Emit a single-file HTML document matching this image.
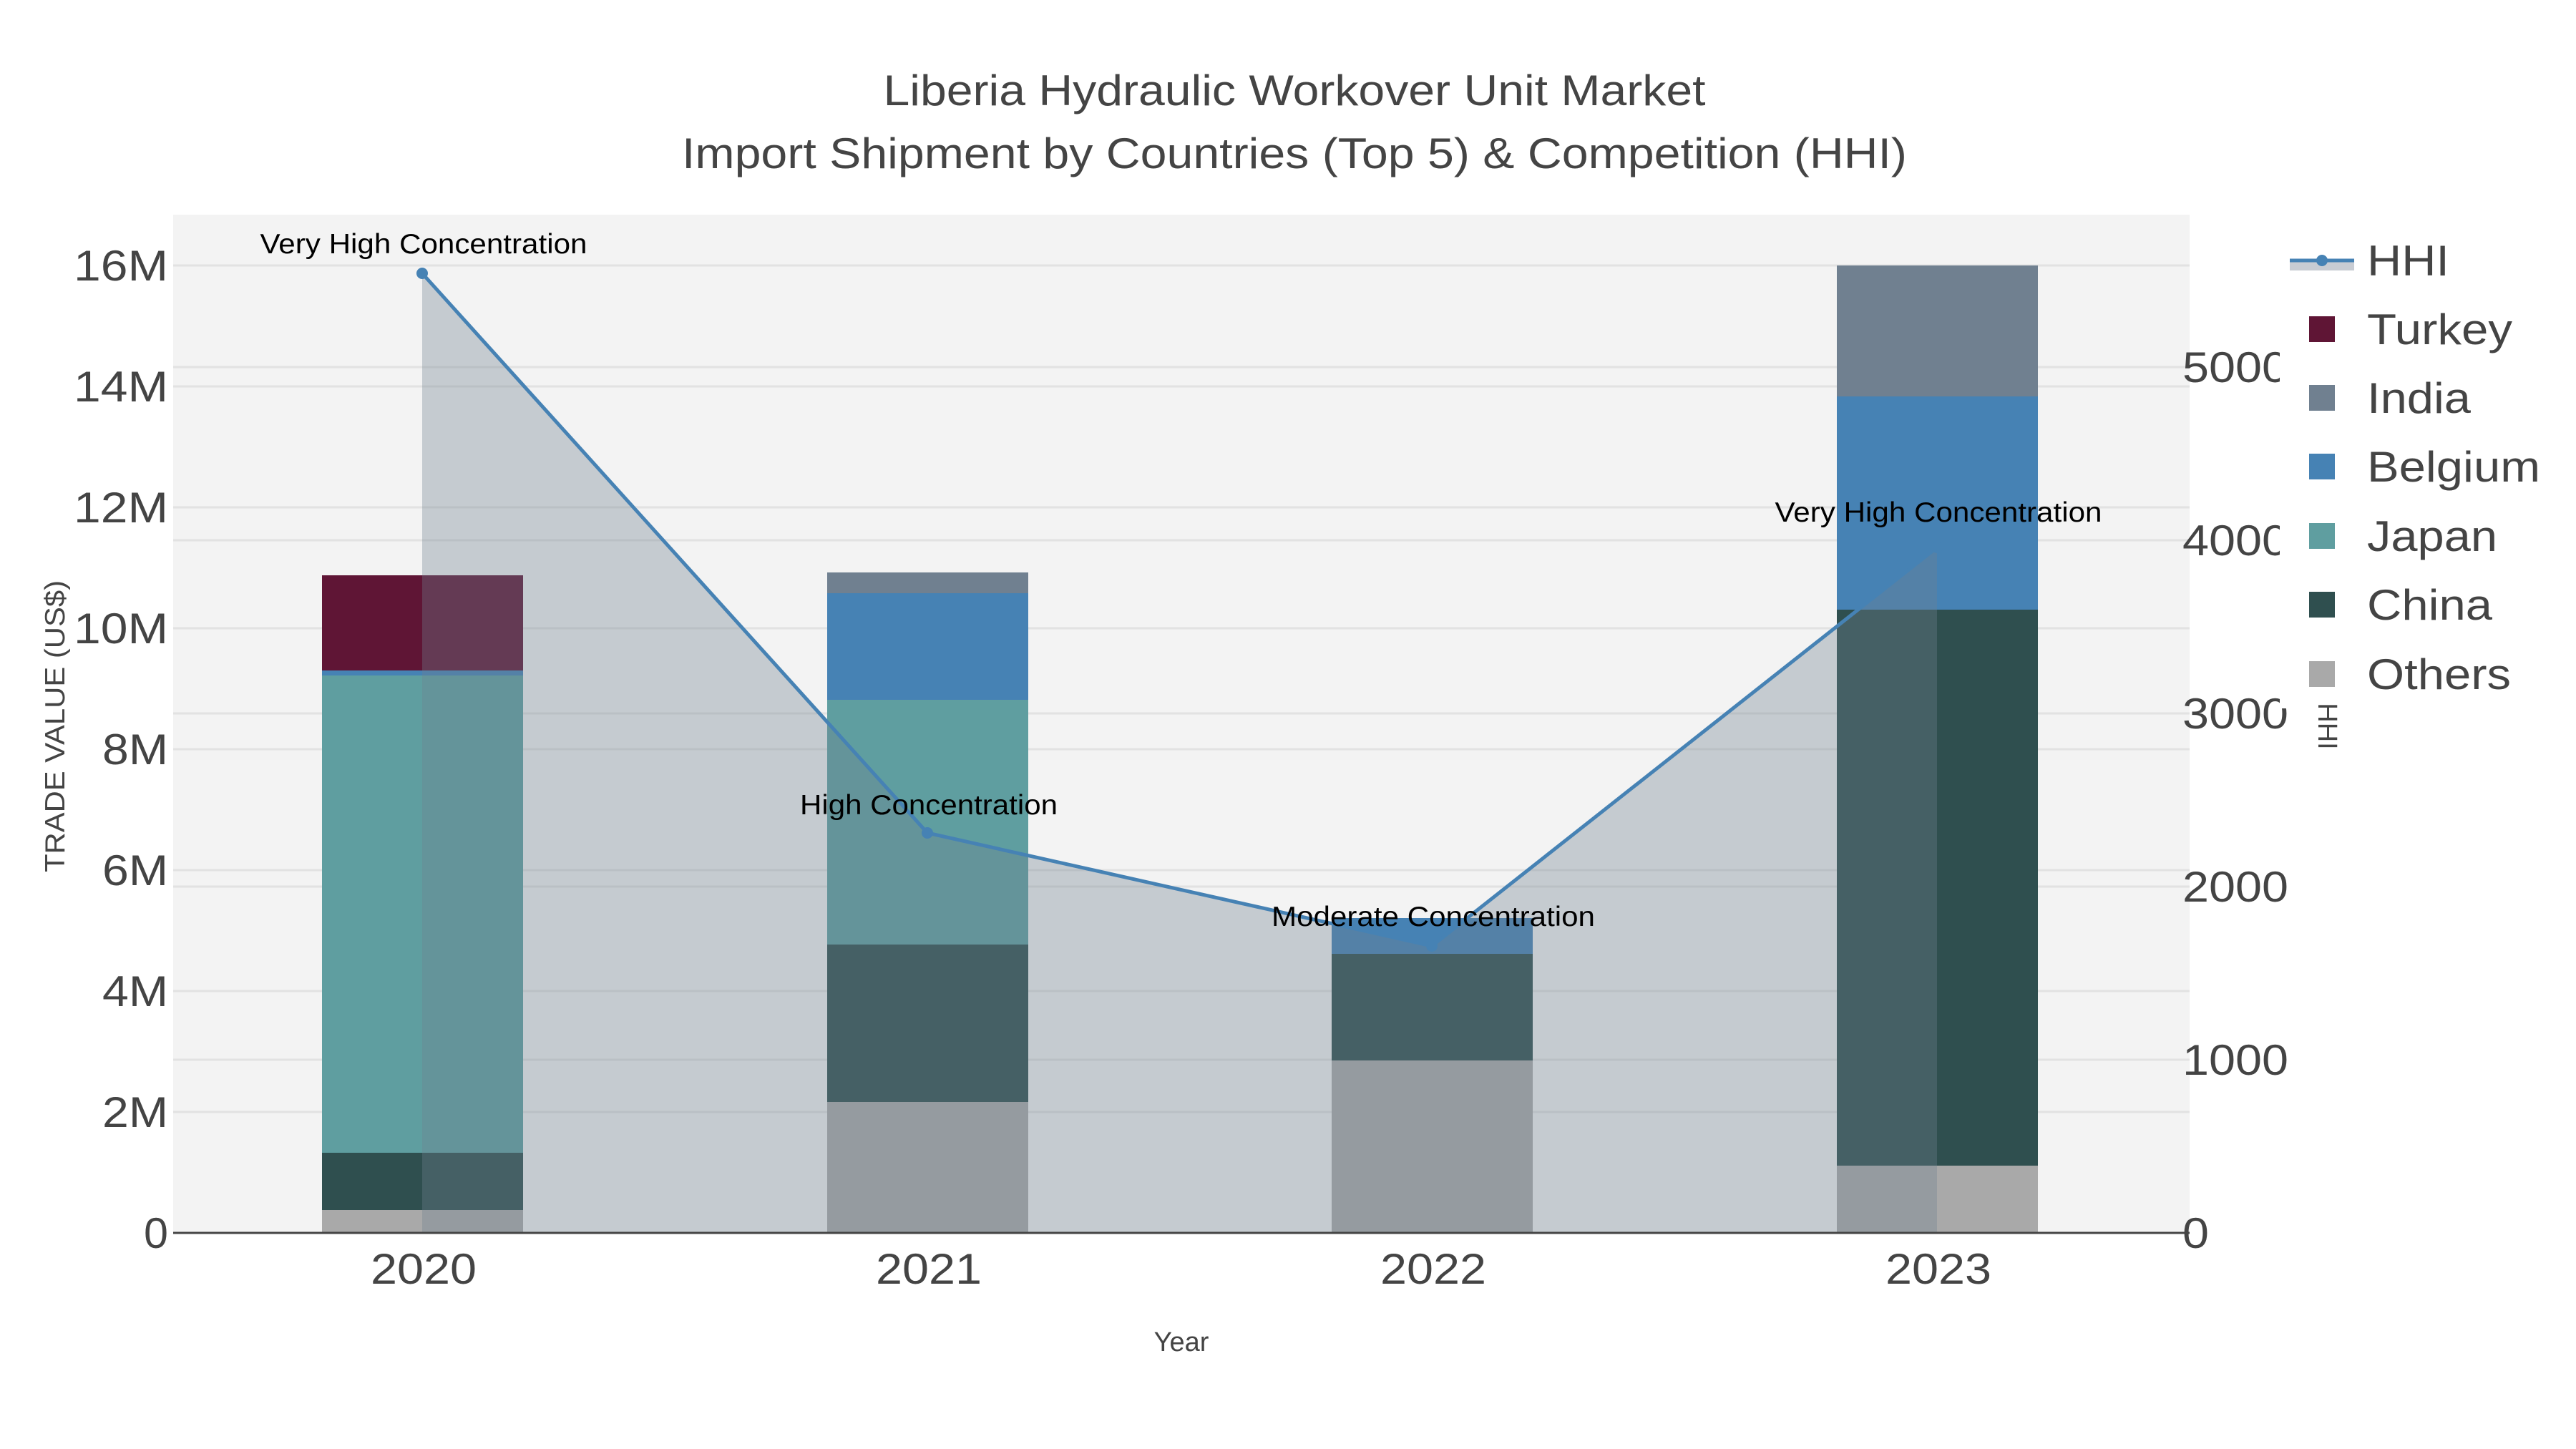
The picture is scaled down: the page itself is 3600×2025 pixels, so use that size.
<!DOCTYPE html>
<html><head><meta charset="utf-8"><style>
html,body{margin:0;padding:0;background:#fff;}
svg{display:block;font-family:"Liberation Sans",Arial,sans-serif;}
</style></head><body>
<svg width="3600" height="2025" viewBox="0 0 3600 2025" xmlns="http://www.w3.org/2000/svg">
<rect width="3600" height="2025" fill="#fff"/>
<rect x="242" y="300" width="2818" height="1423" fill="#f3f3f3"/>
<g stroke="#e2e2e2" stroke-width="3">
<line x1="242" x2="3060" y1="1554" y2="1554"/>
<line x1="242" x2="3060" y1="1385" y2="1385"/>
<line x1="242" x2="3060" y1="1216" y2="1216"/>
<line x1="242" x2="3060" y1="1047" y2="1047"/>
<line x1="242" x2="3060" y1="878" y2="878"/>
<line x1="242" x2="3060" y1="709" y2="709"/>
<line x1="242" x2="3060" y1="540" y2="540"/>
<line x1="242" x2="3060" y1="371" y2="371"/>
<line x1="242" x2="3060" y1="1481" y2="1481"/>
<line x1="242" x2="3060" y1="1239" y2="1239"/>
<line x1="242" x2="3060" y1="997" y2="997"/>
<line x1="242" x2="3060" y1="755" y2="755"/>
<line x1="242" x2="3060" y1="513" y2="513"/>
</g>
<g>
<rect x="450" y="1691" width="281" height="32" fill="#a9a9a9"/>
<rect x="450" y="1611" width="281" height="80" fill="#2f4f4f"/>
<rect x="450" y="944" width="281" height="667" fill="#5f9ea0"/>
<rect x="450" y="937" width="281" height="7" fill="#4682b4"/>
<rect x="450" y="804" width="281" height="133" fill="#5f1535"/>

<rect x="1156" y="1540" width="281" height="183" fill="#a9a9a9"/>
<rect x="1156" y="1320" width="281" height="220" fill="#2f4f4f"/>
<rect x="1156" y="978" width="281" height="342" fill="#5f9ea0"/>
<rect x="1156" y="829" width="281" height="149" fill="#4682b4"/>
<rect x="1156" y="800" width="281" height="29" fill="#708090"/>

<rect x="1861" y="1482" width="281" height="241" fill="#a9a9a9"/>
<rect x="1861" y="1333" width="281" height="149" fill="#2f4f4f"/>
<rect x="1861" y="1283" width="281" height="50" fill="#4682b4"/>

<rect x="2567" y="1629" width="281" height="94" fill="#a9a9a9"/>
<rect x="2567" y="852" width="281" height="777" fill="#2f4f4f"/>
<rect x="2567" y="554" width="281" height="298" fill="#4682b4"/>
<rect x="2567" y="371" width="281" height="183" fill="#708090"/>
</g>
<polygon points="590,382 1296,1164 2001,1322 2707,765 2707,1723 590,1723" fill="rgba(112,128,144,0.35)"/>
<line x1="242" x2="3060" y1="1723" y2="1723" stroke="#444" stroke-width="3"/>
<polyline points="590,382 1296,1164 2001,1322 2707,765" fill="none" stroke="#4682b4" stroke-width="5"/>
<g fill="#4682b4"><circle cx="590" cy="382" r="8"/><circle cx="1296" cy="1164" r="8"/><circle cx="2001" cy="1322" r="8"/><circle cx="2707" cy="765" r="8"/></g>
<g font-size="39" fill="#000" text-anchor="middle" lengthAdjust="spacingAndGlyphs">
<text x="592" y="354" textLength="457" lengthAdjust="spacingAndGlyphs">Very High Concentration</text>
<text x="1298" y="1138" textLength="360" lengthAdjust="spacingAndGlyphs">High Concentration</text>
<text x="2003" y="1294" textLength="452" lengthAdjust="spacingAndGlyphs">Moderate Concentration</text>
<text x="2709" y="729" textLength="457" lengthAdjust="spacingAndGlyphs">Very High Concentration</text>
</g>
<g font-size="60" fill="#444" text-anchor="end">
<text x="235" y="1744" textLength="34" lengthAdjust="spacingAndGlyphs">0</text>
<text x="235" y="1575" textLength="92" lengthAdjust="spacingAndGlyphs">2M</text>
<text x="235" y="1406" textLength="92" lengthAdjust="spacingAndGlyphs">4M</text>
<text x="235" y="1237" textLength="92" lengthAdjust="spacingAndGlyphs">6M</text>
<text x="235" y="1068" textLength="92" lengthAdjust="spacingAndGlyphs">8M</text>
<text x="235" y="899" textLength="132" lengthAdjust="spacingAndGlyphs">10M</text>
<text x="235" y="730" textLength="132" lengthAdjust="spacingAndGlyphs">12M</text>
<text x="235" y="561" textLength="132" lengthAdjust="spacingAndGlyphs">14M</text>
<text x="235" y="392" textLength="132" lengthAdjust="spacingAndGlyphs">16M</text>
</g>
<g font-size="60" fill="#444">
<text x="3050" y="1744" textLength="37" lengthAdjust="spacingAndGlyphs">0</text>
<text x="3050" y="1502" textLength="148" lengthAdjust="spacingAndGlyphs">1000</text>
<text x="3050" y="1260" textLength="148" lengthAdjust="spacingAndGlyphs">2000</text>
<text x="3050" y="1018" textLength="148" lengthAdjust="spacingAndGlyphs">3000</text>
<text x="3050" y="776" textLength="148" lengthAdjust="spacingAndGlyphs">4000</text>
<text x="3050" y="534" textLength="148" lengthAdjust="spacingAndGlyphs">5000</text>
</g>
<g font-size="60" fill="#444" text-anchor="middle">
<text x="592" y="1794" textLength="148" lengthAdjust="spacingAndGlyphs">2020</text>
<text x="1298" y="1794" textLength="148" lengthAdjust="spacingAndGlyphs">2021</text>
<text x="2003" y="1794" textLength="148" lengthAdjust="spacingAndGlyphs">2022</text>
<text x="2709" y="1794" textLength="148" lengthAdjust="spacingAndGlyphs">2023</text>
</g>
<text x="1651" y="1888" font-size="38" fill="#444" text-anchor="middle">Year</text>
<text transform="translate(90,1015) rotate(-90)" font-size="39" fill="#444" text-anchor="middle" textLength="408" lengthAdjust="spacingAndGlyphs">TRADE VALUE (US$)</text>
<text x="1809" y="147" font-size="60" fill="#444" text-anchor="middle" textLength="1149" lengthAdjust="spacingAndGlyphs">Liberia Hydraulic Workover Unit Market</text>
<text x="1809" y="235" font-size="60" fill="#444" text-anchor="middle" textLength="1712" lengthAdjust="spacingAndGlyphs">Import Shipment by Countries (Top 5) &amp; Competition (HHI)</text>
<rect x="3186" y="300" width="414" height="690" fill="#fff"/>
<text transform="translate(3240,1015) rotate(90)" font-size="38" fill="#444" text-anchor="middle">HHI</text>
<rect x="3200" y="364" width="90" height="14" fill="#c8ccd3"/>
<line x1="3200" x2="3290" y1="364" y2="364" stroke="#4682b4" stroke-width="5"/>
<circle cx="3245" cy="364" r="8" fill="#4682b4"/>
<rect x="3227" y="442" width="36" height="36" fill="#5f1535"/>
<rect x="3227" y="538" width="36" height="36" fill="#708090"/>
<rect x="3227" y="634" width="36" height="36" fill="#4682b4"/>
<rect x="3227" y="731" width="36" height="36" fill="#5f9ea0"/>
<rect x="3227" y="827" width="36" height="36" fill="#2f4f4f"/>
<rect x="3227" y="924" width="36" height="36" fill="#a9a9a9"/>
<g font-size="60" fill="#444">
<text x="3308" y="385" textLength="115" lengthAdjust="spacingAndGlyphs">HHI</text>
<text x="3308" y="481" textLength="203" lengthAdjust="spacingAndGlyphs">Turkey</text>
<text x="3308" y="577" textLength="145" lengthAdjust="spacingAndGlyphs">India</text>
<text x="3308" y="673" textLength="242" lengthAdjust="spacingAndGlyphs">Belgium</text>
<text x="3308" y="770" textLength="182" lengthAdjust="spacingAndGlyphs">Japan</text>
<text x="3308" y="866" textLength="175" lengthAdjust="spacingAndGlyphs">China</text>
<text x="3308" y="963" textLength="201" lengthAdjust="spacingAndGlyphs">Others</text>
</g>
</svg>
</body></html>
